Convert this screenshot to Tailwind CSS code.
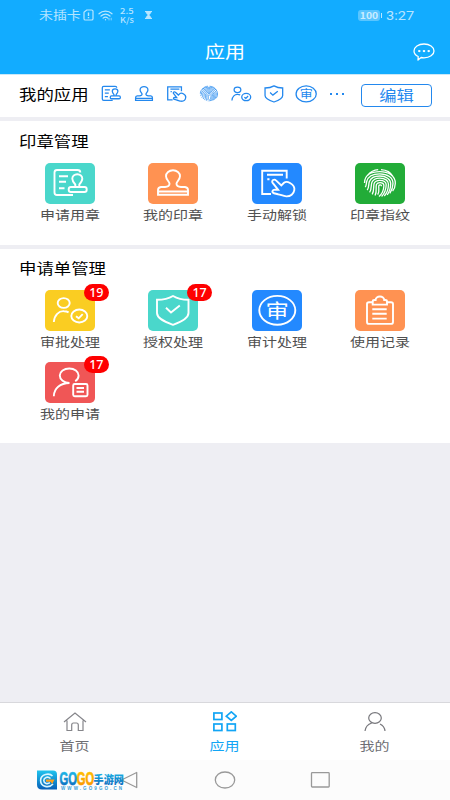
<!DOCTYPE html>
<html lang="zh-CN">
<head>
<meta charset="UTF-8">
<meta name="viewport" content="width=device-width, initial-scale=1">
<title>应用</title>
<script src="https://cdn.jsdelivr.net/npm/@tailwindcss/browser@4"></script>
</head>
<body class="w-[450px] h-[800px] overflow-hidden bg-[#eeeef3] font-['Noto_Sans_CJK_SC','Noto_Sans',sans-serif] text-black">
<svg class="hidden">
  <symbol id="apply" viewBox="0 0 50 41">
    <path d="M35.3 9.5Q35.3 7 32.5 7H12Q9.5 7 9.5 9.5V29.5Q9.5 32 12 32H28M14 13.3H23M14 18.8H21M14 25.2H19.5"/>
    <path d="M30.3 23.7V21.5C28.5 19.5 27.3 18 27.3 15.8A5 4.6 0 0 1 37.3 15.8C37.3 18 36 19.5 34.3 21.5V23.7"/>
    <rect x="23.7" y="24" width="18" height="5" rx="2.3"/>
  </symbol>
  <symbol id="stamp" viewBox="0 0 50 41">
    <path d="M10 31.7V27Q10 24.5 13 24H17C20 23.8 21.7 22.5 21.5 20.5C21.4 18.7 18 16.5 18 13.3A7 6 0 0 1 32 13.3C32 16.5 28.6 18.7 28.5 20.5C28.3 22.5 30 23.8 33 24H37Q40 24.5 40 27V31.7ZM10 28.5H40"/>
  </symbol>
  <symbol id="touch" viewBox="0 0 50 41">
    <path d="M34.7 15.5V7.7H10.2V31H19M15 11.8H31M15.3 16.3H17.5"/>
    <path d="M26 26.7L20.5 19.6C19.2 17.6 22.2 15.6 24 17.4L29.3 22.4L32 19.8C33.7 18.4 36 18.8 38 20C42 22.3 42.8 24.7 42.3 27.2C41.8 30.8 38.5 33.6 34.3 33.4C31 33.2 29 31.7 26 31.2L22 30.3C19.3 29.3 20.4 26.6 23 26.6Z"/>
  </symbol>
  <symbol id="finger" viewBox="0 0 50 41">
    <g stroke-width="1.3">
      <path d="M12.5 12.5C15.5 8.5 19.5 6.7 23.2 6.6M26 6.6C32 6.9 36.2 10 38.2 13.8M9.5 20C9.5 11.5 17 8.6 24.8 8.6C33 8.6 40.5 12.5 40.3 20.5C40.2 23.5 39.4 26 37.6 28.2"/>
      <path d="M10.2 24.2C11.5 22.5 11.2 20.5 11.7 18.5C13 13.3 18.5 10.8 24.8 10.8C32.5 10.8 38.2 14.8 38 20.6C37.9 24.5 36.8 27.5 34.8 30.4"/>
      <path d="M12.2 27.2C14.2 24.6 13.4 21.3 14.3 18.7C15.7 14.9 20 13 24.8 13C31 13 35.8 16.2 35.7 20.8C35.6 25.4 34.3 29 32.2 32"/>
      <path d="M14.6 29.4C16.8 26.7 15.8 22.5 16.8 19.6C18 16.6 21.2 15.2 24.8 15.2C30 15.2 33.6 17.7 33.5 21.2C33.4 25.9 32 30 29.3 33"/>
      <path d="M17.2 31.3C19.4 27.9 18.2 23.5 19.1 20.6C20 18.4 22.4 17.4 24.8 17.4C28.6 17.4 31.3 19 31.2 21.8C31 26.6 29.6 30.5 26.6 33.5"/>
      <path d="M20.1 32.5C22.2 28.4 20.5 24.6 21.4 21.6C22.1 20.1 23.5 19.6 25 19.6C27.4 19.6 29 20.6 28.9 22.8C28.7 27 27.2 31 24 33.5M22.7 31.6C25 27.9 23.3 25.1 23.8 22.8C24.2 21.5 26.6 21.5 26.5 23.2"/>
    </g>
  </symbol>
  <symbol id="approve" viewBox="0 0 50 41">
    <ellipse cx="18.7" cy="13" rx="6" ry="4.9"/>
    <path d="M8.8 32C9.3 25 14 20.8 19 21.2C20.8 21.2 22.3 21.6 23.6 22.4M31 26.2L33.7 28.3L37.7 24.2"/>
    <ellipse cx="34.3" cy="26" rx="8" ry="6.5"/>
  </symbol>
  <symbol id="shield" viewBox="0 0 50 41">
    <path d="M25 6C20.5 8.7 15 9.8 9 9.8V23C9 28.3 16 31.6 25 34.8C34 31.6 40.5 28.3 40.5 23V9.8C34.5 9.8 29.5 8.7 25 6Z"/>
    <path d="M18 17.8L23 22.5L31.8 15.5"/>
  </symbol>
  <symbol id="audit" viewBox="0 0 50 41">
    <ellipse cx="25.3" cy="20.3" rx="18" ry="14.4"/>
    <text transform="translate(25.3 27.6) scale(1.2 1)" text-anchor="middle" font-size="19.5" font-weight="400" stroke="none" fill="currentColor">审</text>
  </symbol>
  <symbol id="board" viewBox="0 0 50 41">
    <path d="M18 12.3H14Q12 12.3 12 14V32Q12 33.9 14 33.9H36Q38 33.9 38 32V14Q38 12.3 36 12.3H32M17.3 19.2H31.7M17.3 23.8H31.7M17.3 28.6H31.7"/>
    <path d="M17.7 14.6V11.5Q17.7 10 19.5 10H20.6A4.3 3.5 0 0 1 29.2 10H30.3Q32 10 32 11.5V14.6Z"/>
  </symbol>
  <symbol id="mine" viewBox="0 0 50 41">
    <path d="M30.2 19.3C32.3 18 33.6 16 33.6 13.5C33.6 9.5 29.5 6.5 24.3 6.5C19 6.5 14.8 9.5 14.8 13.5C14.8 17.7 19 21 24.5 21C15 21.2 9 26.5 8.8 34.3"/>
    <rect x="28.2" y="22" width="14.3" height="12.2" rx="1.5"/><path d="M31.5 26H39M31.5 29.8H39"/>
  </symbol>
</svg>

<main class="flex h-[800px] flex-col">
  <header class="h-[74px] bg-[#12acff] text-white">
    <div class="flex h-[30px] items-center justify-between pl-[39px] pr-[36px] text-white/70">
      <div class="flex items-center">
        <span class="block w-[42px] text-[12px] leading-none"><span class="inline-block origin-left scale-x-[1.16] whitespace-nowrap">未插卡</span></span>
        <svg class="ml-[2px] h-[12px] w-[11px]" viewBox="0 0 11 12" fill="none" stroke="currentColor" stroke-width="1.2"><path d="M1 3.2L3.7 1H8.5Q10 1 10 2.3V9.7Q10 11 8.5 11H2.5Q1 11 1 9.7Z"/><path d="M5.5 3.5V7M5.5 8V9.3" stroke-width="1.4"/></svg>
        <svg class="ml-[4px] h-[11px] w-[15px]" viewBox="0 0 15 11" fill="none" stroke="currentColor" stroke-width="1.2" stroke-linecap="round"><path d="M1 3.8C4.7.3 10.3.3 14 3.8M3 6C5.8 3.6 9.2 3.6 12 6M5.1 8.1C6.7 6.8 8.3 6.8 9.9 8.1"/><circle cx="7.5" cy="9.7" r=".7" fill="currentColor" stroke="none"/><path d="M11 10V8.4M13.2 8.2V10" stroke-width=".7"/></svg>
        <span class="ml-[7px] flex w-[18px] flex-col text-[8px] leading-[9px]"><span class="w-fit origin-left scale-x-[1.18] font-medium">2.5</span><span class="w-fit origin-left scale-x-[1.12] font-medium">K/s</span></span>
        <svg class="ml-[6px] h-[8px] w-[9px]" viewBox="0 0 9 8"><path d="M1 0H8V1.3H7C7 3 5.8 3.3 5.2 4C5.8 4.7 7 5 7 6.7H8V8H1V6.7H2C2 5 3.2 4.7 3.8 4C3.2 3.3 2 3 2 1.3H1Z" fill="currentColor"/></svg>
      </div>
      <div class="flex items-center">
        <span class="flex h-[11px] w-[22px] items-center justify-center rounded-[3px] bg-white/30 text-[9px] font-bold leading-none"><span class="scale-x-[1.15]">100</span></span>
        <span class="ml-[1px] h-[5px] w-[1.5px] bg-white/70"></span>
        <span class="ml-[4px] block w-[28px] font-['Roboto',sans-serif] text-[13px] leading-none"><span class="inline-block origin-left scale-x-[1.12]">3:27</span></span>
      </div>
    </div>
    <div class="grid h-[44px] grid-cols-[1fr_auto_1fr] items-center pb-[1px] pr-[15px] pl-[15px]">
      <span></span>
      <h1 class="mb-[2px] scale-x-[1.18] text-[17px] leading-none">应用</h1>
      <svg class="h-[18px] w-[22px] justify-self-end" viewBox="0 0 22 18" fill="none" stroke="currentColor" stroke-width="1.3"><path d="M5.2 13.5C2.4 12.1 1 10.1 1 7.9C1 4 5.4 1 11 1S21 4 21 7.9S16.6 14.8 11 14.8C10 14.8 9 14.7 8.1 14.5L5 17Z" stroke-linejoin="round"/><g fill="currentColor" stroke="none"><ellipse cx="6.3" cy="8.1" rx="1.3" ry="1.1"/><ellipse cx="11" cy="8.1" rx="1.3" ry="1.1"/><ellipse cx="15.7" cy="8.1" rx="1.3" ry="1.1"/></g></svg>
    </div>
  </header>

  <section class="flex h-[43px] items-center border-t border-[#c9e8f8] bg-white pl-[19px] pr-[18px] pb-[4px]">
    <h2 class="w-[72px] text-[14.5px] leading-none"><span class="inline-block origin-left scale-x-[1.2] whitespace-nowrap">我的应用</span></h2>
    <div class="ml-[6px] flex w-[223px] justify-between fill-none stroke-[#2388ee] stroke-[2.3] text-[#2388ee]">
      <svg class="h-[24px] w-[28px]"><use href="#apply"/></svg>
      <svg class="h-[24px] w-[28px]"><use href="#stamp"/></svg>
      <svg class="h-[24px] w-[28px]"><use href="#touch"/></svg>
      <svg class="h-[24px] w-[28px]"><use href="#finger"/></svg>
      <svg class="h-[24px] w-[28px]"><use href="#approve"/></svg>
      <svg class="h-[24px] w-[28px]"><use href="#shield"/></svg>
      <svg class="h-[24px] w-[28px]"><use href="#audit"/></svg>
    </div>
    <div class="ml-[10px] flex gap-[4px]"><i class="size-[2px] bg-[#2388ee]"></i><i class="size-[2px] bg-[#2388ee]"></i><i class="size-[2px] bg-[#2388ee]"></i></div>
    <button class="mt-[3px] ml-auto flex h-[23px] w-[71px] items-center justify-center rounded-[4px] border-[1.5px] border-[#2388ee] pb-[1px] text-[14.5px] leading-none text-[#2388ee]"><span class="scale-x-[1.19]">编辑</span></button>
  </section>

  <section class="mt-[4px] h-[124px] bg-white pt-[12px]">
    <h2 class="ml-[19px] w-fit origin-left scale-x-[1.2] text-[14.5px] leading-[15px]">印章管理</h2>
    <div class="mx-[18.5px] mt-[15px] grid grid-cols-4 fill-none stroke-white stroke-[1.9] text-[12.5px] leading-[14px] text-[#505050]">
      <div class="flex flex-col items-center"><div class="h-[41px] w-[50px] rounded-[5px] bg-[#4ad7cb] text-white"><svg class="h-[41px] w-[50px]"><use href="#apply"/></svg></div><span class="mt-[4px] scale-x-[1.2]">申请用章</span></div>
      <div class="flex flex-col items-center"><div class="h-[41px] w-[50px] rounded-[5px] bg-[#ff9252] text-white"><svg class="h-[41px] w-[50px]"><use href="#stamp"/></svg></div><span class="mt-[4px] scale-x-[1.2]">我的印章</span></div>
      <div class="flex flex-col items-center"><div class="h-[41px] w-[50px] rounded-[5px] bg-[#2389ff] text-white"><svg class="h-[41px] w-[50px]"><use href="#touch"/></svg></div><span class="mt-[4px] scale-x-[1.2]">手动解锁</span></div>
      <div class="flex flex-col items-center"><div class="h-[41px] w-[50px] rounded-[5px] bg-[#22ac38] text-white"><svg class="h-[41px] w-[50px]"><use href="#finger"/></svg></div><span class="mt-[4px] scale-x-[1.2]">印章指纹</span></div>
    </div>
  </section>

  <section class="mt-[4px] h-[194px] bg-white pt-[11px]">
    <h2 class="ml-[19px] w-fit origin-left scale-x-[1.2] text-[14.5px] leading-[15px]">申请单管理</h2>
    <div class="mx-[18.5px] mt-[15px] grid grid-cols-4 gap-y-[13px] fill-none stroke-white stroke-[1.9] text-[12.5px] leading-[14px] text-[#505050]">
      <div class="flex flex-col items-center"><div class="relative h-[41px] w-[50px] rounded-[5px] bg-[#facd22] text-white"><svg class="h-[41px] w-[50px]"><use href="#approve"/></svg><b class="absolute -top-[6px] left-[38.5px] flex h-[17px] w-[25.5px] items-center justify-center rounded-full bg-[#fe0000] font-['Noto_Sans',sans-serif] text-[12.5px] font-medium">19</b></div><span class="mt-[4px] scale-x-[1.2]">审批处理</span></div>
      <div class="flex flex-col items-center"><div class="relative h-[41px] w-[50px] rounded-[5px] bg-[#4ad7cb] text-white"><svg class="h-[41px] w-[50px]"><use href="#shield"/></svg><b class="absolute -top-[6px] left-[38.5px] flex h-[17px] w-[25.5px] items-center justify-center rounded-full bg-[#fe0000] font-['Noto_Sans',sans-serif] text-[12.5px] font-medium">17</b></div><span class="mt-[4px] scale-x-[1.2]">授权处理</span></div>
      <div class="flex flex-col items-center"><div class="h-[41px] w-[50px] rounded-[5px] bg-[#2389ff] text-white"><svg class="h-[41px] w-[50px]"><use href="#audit"/></svg></div><span class="mt-[4px] scale-x-[1.2]">审计处理</span></div>
      <div class="flex flex-col items-center"><div class="h-[41px] w-[50px] rounded-[5px] bg-[#ff9252] text-white"><svg class="h-[41px] w-[50px]"><use href="#board"/></svg></div><span class="mt-[4px] scale-x-[1.2]">使用记录</span></div>
      <div class="flex flex-col items-center"><div class="relative h-[41px] w-[50px] rounded-[5px] bg-[#f05656] text-white"><svg class="h-[41px] w-[50px]"><use href="#mine"/></svg><b class="absolute -top-[6px] left-[38.5px] flex h-[17px] w-[25.5px] items-center justify-center rounded-full bg-[#fe0000] font-['Noto_Sans',sans-serif] text-[12.5px] font-medium">17</b></div><span class="mt-[4px] scale-x-[1.2]">我的申请</span></div>
    </div>
  </section>

  <nav class="mt-auto grid h-[58px] grid-cols-3 border-t border-[#d8d8dc] bg-white text-[12.5px] leading-[14px] text-[#6e6e73]">
    <a class="flex flex-col items-center pt-[8px]"><svg class="h-[21px] w-[24px]" viewBox="0 0 24 21" fill="none" stroke="#85858a" stroke-width="1.2"><path d="M1 11L12 2L23 11M4 9.5V19.5H8.7V14Q8.7 12 10.5 12H13.5Q15.3 12 15.3 14V19.5H20V9.5"/></svg><span class="mt-[7px] scale-x-[1.2]">首页</span></a>
    <a class="flex flex-col items-center pt-[8px] text-[#12a5f5]"><svg class="h-[21px] w-[24px]" viewBox="0 0 24 21" fill="none" stroke="currentColor" stroke-width="1.7"><rect x=".9" y="2" width="8" height="6.5"/><rect x=".9" y="13" width="8" height="6.5"/><rect x="14.3" y="13" width="8" height="6.5"/><path d="M18.3.9L23.3 5.2L18.3 9.5L13.3 5.2Z"/></svg><span class="mt-[7px] scale-x-[1.2]">应用</span></a>
    <a class="flex flex-col items-center pt-[8px]"><svg class="h-[21px] w-[24px]" viewBox="0 0 24 21" fill="none" stroke="#77777c" stroke-width="1.2"><ellipse cx="12" cy="7" rx="6.3" ry="5.3"/><path d="M2 20C2.4 16.3 5 13.3 8.8 12M17 13C20 14.4 21.7 17 22 20"/></svg><span class="mt-[7px] scale-x-[1.2]">我的</span></a>
  </nav>

  <footer class="relative h-[40px] bg-[#fcfcfc]">
    <svg class="block h-[40px] w-[450px]" viewBox="0 0 450 40" fill="none" stroke="#999" stroke-width="1.3"><path d="M136.7 12.5V27.5L121.5 20Z" stroke-linejoin="round"/><ellipse cx="225" cy="20" rx="9.7" ry="8"/><rect x="311.5" y="12.7" width="17.7" height="14.3" rx=".8"/></svg>
    <svg class="absolute top-[9px] left-[36px] h-[28px] w-[90px] overflow-visible" viewBox="0 0 90 28">
      <defs>
        <linearGradient id="blue" x2="0" y2="1"><stop stop-color="#20c4ee"/><stop offset="1" stop-color="#0860b8"/></linearGradient>
        <linearGradient id="gold" x2="0" y2="1"><stop stop-color="#ffc400"/><stop offset="1" stop-color="#f99000"/></linearGradient>
      </defs>
      <path d="M1 1.5H17Q21 1.5 21 5.5V20.5H6Q1 20.5 1 15.5Z" fill="url(#blue)"/>
      <path d="M16.5 7C13.5 3.7 4.6 4.7 4.6 11.5C4.6 18 13 19.5 17 15M14.5 9.5C11.5 6.9 7.8 8.5 7.8 11.5C7.8 14.5 11.5 15.5 14 13.7" fill="none" stroke="#d9f5ff" stroke-width="1.6"/>
      <path d="M10 10.5H18.5L16.2 15L14.7 12.8H10Z" fill="#ffa11a"/>
      <g font-family="Liberation Sans, sans-serif" font-weight="700" font-size="17.5" stroke-width=".7">
        <text transform="translate(23.5 16) scale(.64 1)" fill="url(#blue)" stroke="url(#blue)">GO</text>
        <text transform="translate(40.7 16) scale(.64 1)" fill="url(#gold)" stroke="url(#gold)">GO</text>
      </g>
      <text transform="translate(57.5 14.8) scale(.86 1)" font-size="11.8" font-weight="900" fill="url(#blue)">手游网</text>
      <text x="25" y="21" font-family="Liberation Sans, sans-serif" font-size="4.5" font-weight="700" textLength="61" fill="#38a0d8">WWW.GO9GO.CN</text>
    </svg>
  </footer>
</main>
</body>
</html>
